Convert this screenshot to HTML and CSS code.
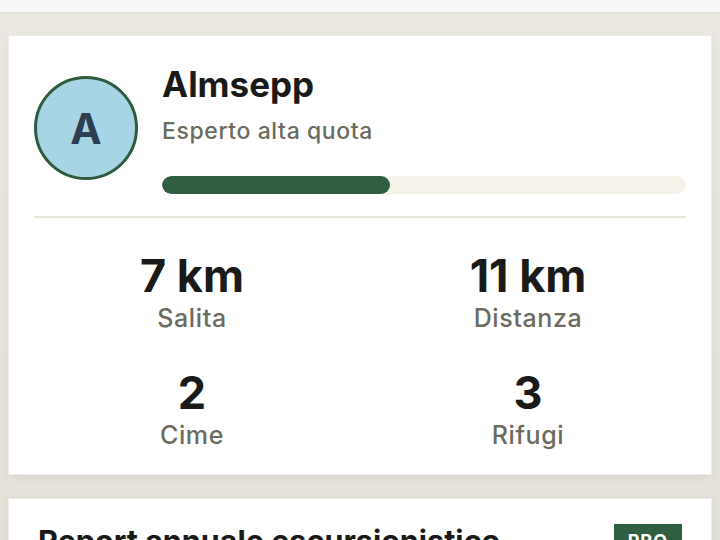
FILE: index.html
```html
<!DOCTYPE html>
<html lang="it">
<head>
    <meta charset="UTF-8">
    <meta name="viewport" content="width=device-width, initial-scale=1.0">
    <title>Profilo escursionista</title>
    <link rel="stylesheet" href="styles.css">
</head>
<body>
    <div class="top-bar"></div>

    <div class="card profile-card">
        <div class="profile-header">
            <div class="avatar">A</div>
            <div class="profile-info">
                <h1 class="name">Almsepp</h1>
                <p class="level">Esperto alta quota</p>
                <div class="progress">
                    <div class="progress-fill" style="width: 43.5%"></div>
                </div>
            </div>
        </div>

        <div class="stats">
            <div class="stat">
                <div class="stat-value">7 km</div>
                <div class="stat-label">Salita</div>
            </div>
            <div class="stat">
                <div class="stat-value">11 km</div>
                <div class="stat-label">Distanza</div>
            </div>
            <div class="stat">
                <div class="stat-value">2</div>
                <div class="stat-label">Cime</div>
            </div>
            <div class="stat">
                <div class="stat-value">3</div>
                <div class="stat-label">Rifugi</div>
            </div>
        </div>
    </div>

    <div class="card report-card">
        <div class="report-header">
            <h2 class="report-title">Report annuale escursionistico</h2>
            <span class="badge">PRO</span>
        </div>
    </div>
</body>
</html>
```

FILE: styles.css
```css
body {
    margin: 0;
    font-family: Inter, "Noto Sans", sans-serif;
    background: linear-gradient(#ebe8e1, #e4e1d9);
    color: #1c1c1a;
    overflow: hidden;
    height: 540px;
}
.top-bar {
    height: 12px;
    background: #f8f8f8;
    box-shadow: 0 1px 3px rgba(0, 0, 0, 0.04);
}
.card {
    background: #fff;
    margin: 23px 8px 0;
    border: 1px solid #efece6;
    box-shadow: 0 2px 10px rgba(0, 0, 0, 0.05);
}
.profile-card {
    padding: 26px 25px 23px;
}
.profile-header {
    display: flex;
    align-items: center;
    gap: 24px;
}
.avatar {
    width: 98px;
    height: 98px;
    flex-shrink: 0;
    border-radius: 50%;
    border: 3px solid #2f5b3e;
    background: #a8d5e6;
    color: #2c3e50;
    font-size: 42px;
    font-weight: 700;
    display: flex;
    align-items: center;
    justify-content: center;
}
.profile-info {
    flex: 1;
}
.name {
    margin: 0;
    font-size: 35px;
    font-weight: 700;
    line-height: 44px;
    color: #1a1a18;
}
.level {
    margin: 10px 0 0;
    font-size: 23px;
    font-weight: 500;
    line-height: 30px;
    letter-spacing: 0.6px;
    color: #6b6b60;
}
.progress {
    margin-top: 30px;
    height: 18px;
    border-radius: 9px;
    background: #f5f2ea;
    overflow: hidden;
}
.progress-fill {
    height: 100%;
    border-radius: 9px;
    background: #2f5e40;
}
.stats {
    margin-top: 22px;
    border-top: 2px solid #ebe7dc;
    padding-top: 32px;
    display: grid;
    grid-template-columns: 1fr 1fr;
    column-gap: 20px;
    row-gap: 33px;
    text-align: center;
}
.stat-value {
    font-size: 45px;
    font-weight: 700;
    line-height: 52px;
    color: #1a1a18;
}
.stat-label {
    font-size: 25px;
    font-weight: 500;
    line-height: 32px;
    letter-spacing: 0.6px;
    color: #6b6b60;
}
.report-card {
    padding: 22px 29px;
}
.report-header {
    display: flex;
    align-items: flex-start;
    justify-content: space-between;
}
.report-title {
    margin: 0;
    font-size: 30.5px;
    font-weight: 700;
    line-height: 40px;
    color: #1a1a18;
}
.badge {
    margin-top: 3px;
    background: #2f5e40;
    color: #fff;
    font-size: 18px;
    font-weight: 700;
    padding: 6px 14px;
    letter-spacing: 1px;
}
```
